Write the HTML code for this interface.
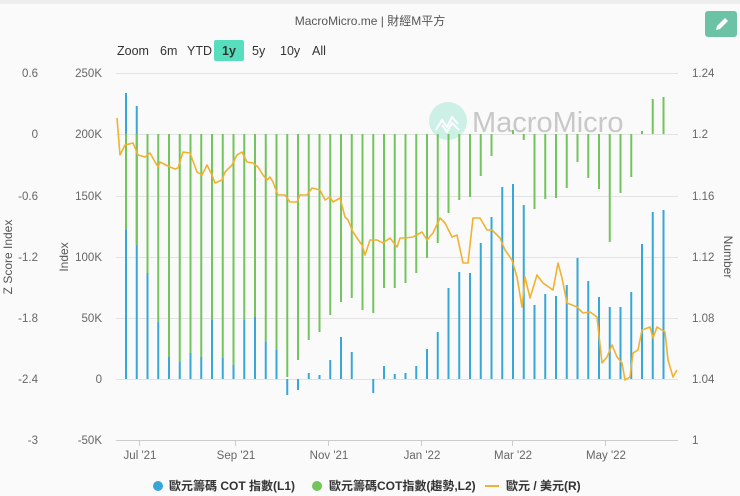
<!DOCTYPE html>
<html><head><meta charset="utf-8"><style>
body{margin:0;width:740px;height:496px;background:#fafafa;overflow:hidden;font-family:"Liberation Sans","Noto Sans CJK TC",sans-serif;}
</style></head><body>
<svg width="740" height="496" xmlns="http://www.w3.org/2000/svg" style="position:absolute;left:0;top:0">
<rect x="0" y="0" width="740" height="4" fill="#eeeeee"/>
<text x="370" y="25" text-anchor="middle" font-size="12" fill="#555" font-family="Liberation Sans,Noto Sans CJK TC,sans-serif">MacroMicro.me | 財經M平方</text>
<rect x="705" y="11" width="32" height="26" rx="3" fill="#6cc2a5"/>
<path d="M716 30 L717 26 L725 18 L728 21 L720 29 Z" fill="#fff"/>
<g font-size="12.5" fill="#333" font-family="Liberation Sans,sans-serif">
<text x="117" y="55">Zoom</text><text x="160" y="55">6m</text><text x="187" y="55">YTD</text>
<rect x="214" y="40" width="30" height="21" rx="2" fill="#57dfbd"/>
<text x="222" y="55" font-weight="bold">1y</text><text x="252" y="55">5y</text><text x="280" y="55">10y</text><text x="312" y="55">All</text>
</g>
<g stroke="#e3e3e3" stroke-width="1">
<line x1="116" x2="678" y1="73.5" y2="73.5"/><line x1="116" x2="678" y1="134.5" y2="134.5"/><line x1="116" x2="678" y1="196.5" y2="196.5"/><line x1="116" x2="678" y1="257.5" y2="257.5"/><line x1="116" x2="678" y1="318.5" y2="318.5"/><line x1="116" x2="678" y1="379.5" y2="379.5"/>
</g>
<line x1="116" x2="678" y1="440.5" y2="440.5" stroke="#ccc"/>
<g stroke="#ccc"><line x1="139.5" x2="139.5" y1="440" y2="446"/><line x1="235.5" x2="235.5" y1="440" y2="446"/><line x1="328.5" x2="328.5" y1="440" y2="446"/><line x1="421.5" x2="421.5" y1="440" y2="446"/><line x1="512.5" x2="512.5" y1="440" y2="446"/><line x1="605.5" x2="605.5" y1="440" y2="446"/></g>
<g font-size="11.5" fill="#666" font-family="Liberation Sans,sans-serif">
<g text-anchor="end"><text x="38" y="77">0.6</text><text x="38" y="138">0</text><text x="38" y="200">-0.6</text><text x="38" y="261">-1.2</text><text x="38" y="322">-1.8</text><text x="38" y="383">-2.4</text><text x="38" y="444">-3</text>
<text x="102" y="77">250K</text><text x="102" y="138">200K</text><text x="102" y="200">150K</text><text x="102" y="261">100K</text><text x="102" y="322">50K</text><text x="102" y="383">0</text><text x="102" y="444">-50K</text></g>
<text x="692" y="77">1.24</text><text x="692" y="138">1.2</text><text x="692" y="200">1.16</text><text x="692" y="261">1.12</text><text x="692" y="322">1.08</text><text x="692" y="383">1.04</text><text x="692" y="444">1</text>
<g text-anchor="middle"><text x="140" y="459">Jul '21</text><text x="236" y="459">Sep '21</text><text x="329" y="459">Nov '21</text><text x="422" y="459">Jan '22</text><text x="513" y="459">Mar '22</text><text x="606" y="459">May '22</text></g>
<text transform="translate(12,257) rotate(-90)" text-anchor="middle" font-size="12" fill="#555">Z Score Index</text>
<text transform="translate(68,257) rotate(-90)" text-anchor="middle" font-size="12" fill="#555">Index</text>
<text transform="translate(724,257) rotate(90)" text-anchor="middle" font-size="12" fill="#555">Number</text>
</g>
<circle cx="448" cy="121" r="19" fill="#c7eee3" opacity="0.9"/>
<path d="M436 130 L442 120 L447 127 L452 117 L458 124 M442 125 L447 132 L452 123 L459 130" stroke="#fff" stroke-width="2" fill="none"/>
<text x="472" y="132" font-size="29" fill="#c8c8c8" font-family="Liberation Sans,sans-serif">MacroMicro</text>
<path stroke="#36a7d6" stroke-width="2" fill="none" d="M126 379V93M136.75 379V106M147.5 379V273M158.25 379V322M169 379V357M179.75 379V362M190.5 379V353M201.25 379V357M212 379V320M222.75 379V358M233.5 379V365M244.25 379V320M255 379V317M265.75 379V342M276.5 379V350M287.25 379V395M298 379V390M308.75 379V373M319.5 379V375M330.25 379V360M341 379V337M351.75 379V352M373.25 379V393M384 379V366M394.75 379V374M405.5 379V373M416.25 379V366M427 379V349M437.75 379V332M448.5 379V288M459.25 379V272M470 379V273M480.75 379V243M491.5 379V217M502.25 379V187M513 379V184M523.75 379V205M534.5 379V305M545.25 379V294M556 379V296M566.75 379V285M577.5 379V258M588.25 379V281M599 379V297M609.75 379V307M620.5 379V307M631.25 379V292M642 379V244M652.75 379V212M663.5 379V210"/>
<path stroke="#72c45c" stroke-width="2" fill="none" d="M126 134V230M136.75 134V245M147.5 134V273M158.25 134V322M169 134V357M179.75 134V362M190.5 134V353M201.25 134V357M212 134V320M222.75 134V358M233.5 134V365M244.25 134V320M255 134V317M265.75 134V342M276.5 134V350M287.25 134V377M298 134V360M308.75 134V340M319.5 134V332M330.25 134V315M341 134V302M351.75 134V298M362.5 134V310M373.25 134V313M384 134V288M394.75 134V288M405.5 134V283M416.25 134V273M427 134V258M437.75 134V243M448.5 134V213M459.25 134V200M470 134V197M480.75 134V176M491.5 134V156M513 134V130M523.75 134V140M534.5 134V209M545.25 134V199M556 134V198M566.75 134V188M577.5 134V162M588.25 134V178M599 134V189M609.75 134V242M620.5 134V193M631.25 134V177M642 134V131M652.75 134V99M663.5 134V97"/>
<polyline fill="none" stroke="#f0b232" stroke-width="1.6" stroke-linejoin="round" points="117,118 120,155 125,145 133,143 138,155 145,157 150,153 158,167 160,162 170,167 175,169 178,168 183,152 190,153 197,172 202,175 207,165 212,175 215,183 222,180 225,172 232,165 237,155 242,152 247,162 253,163 258,167 263,175 267,180 270,177 273,182 278,195 285,195 290,202 297,202 300,195 307,195 312,188 320,190 325,200 330,197 333,202 340,198 345,217 348,220 353,232 357,238 362,245 365,255 370,240 377,240 383,243 390,238 397,247 400,238 405,238 413,237 422,232 427,240 433,233 440,218 445,223 452,237 457,235 463,263 468,263 473,218 480,218 487,230 492,230 500,238 505,250 512,260 517,277 522,307 525,277 530,298 537,275 543,283 553,290 558,263 562,278 567,303 577,307 583,313 590,312 597,317 602,363 607,357 612,345 617,357 622,363 625,380 630,377 633,353 638,350 642,330 650,327 653,338 657,327 665,332 668,360 673,377 677,370"/>
<g font-size="12" fill="#333" font-family="Liberation Sans,Noto Sans CJK TC,sans-serif" font-weight="bold">
<circle cx="158" cy="486" r="5" fill="#36a7d6"/><text x="169" y="490">歐元籌碼 COT 指數(L1)</text>
<circle cx="317" cy="486" r="5" fill="#72c45c"/><text x="329" y="490">歐元籌碼COT指數(趨勢,L2)</text>
<line x1="485" x2="499" y1="486" y2="486" stroke="#f0b232" stroke-width="2"/><text x="506" y="490">歐元 / 美元(R)</text>
</g>
</svg>
</body></html>
